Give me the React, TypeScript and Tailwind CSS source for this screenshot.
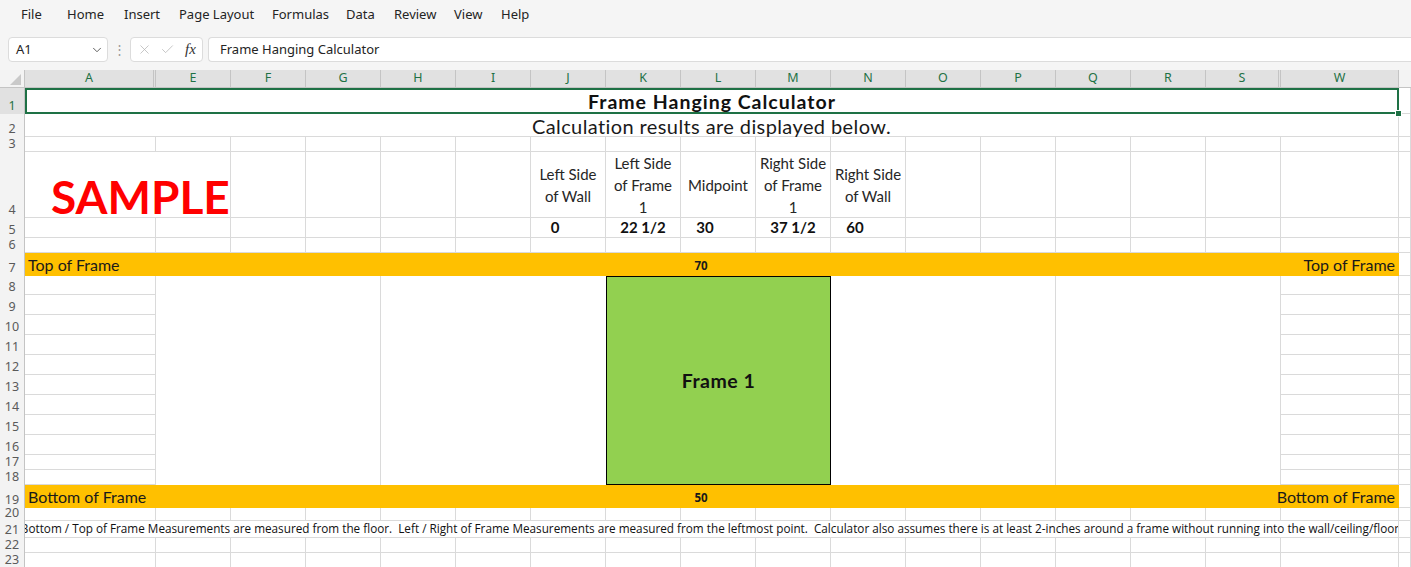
import { ChevronDown, X, Check } from "lucide-react";

const cell = "border-r border-b border-[#dadada]";

const colLetters = ["A", "E", "F", "G", "H", "I", "J", "K", "L", "M", "N", "O", "P", "Q", "R", "S", "W"];

const menu: [string, string][] = [
  ["File", "w-[46px]"],
  ["Home", "w-[57px]"],
  ["Insert", "w-[55px]"],
  ["Page Layout", "w-[93px]"],
  ["Formulas", "w-[74px]"],
  ["Data", "w-[48px]"],
  ["Review", "w-[60px]"],
  ["View", "w-[47px]"],
  ["Help", "w-[47px]"],
];

function RowHead({ n, sel }: { n: number; sel?: boolean }) {
  return (
    <div
      className={`flex items-end justify-center border-r border-[#c4c4c4] pb-[2px] font-['Noto_Sans'] text-[12.5px] leading-[12px] ${
        sel ? "bg-[#e1e1e1] text-[#1e7145]" : "bg-[#f3f3f3] text-[#5a5a5a]"
      }`}
    >
      {n}
    </div>
  );
}

function Blank({ n }: { n: number }) {
  return (
    <>
      {Array.from({ length: n }).map((_, i) => (
        <div key={i} className={cell} />
      ))}
    </>
  );
}

function Label({ lines }: { lines: string[] }) {
  return (
    <div className={`${cell} flex flex-col items-center justify-center whitespace-nowrap text-[15px] leading-[22px] text-[#262626]`}>
      {lines.map((l) => (
        <span key={l}>{l}</span>
      ))}
    </div>
  );
}

function Value({ v, whole }: { v: string; whole?: boolean }) {
  return (
    <div
      className={`${cell} flex items-center justify-center text-[15px] font-bold text-[#111] ${whole ? "pr-[26px]" : ""}`}
    >
      {v}
    </div>
  );
}

function Band({ label, value }: { label: string; value: string }) {
  return (
    <div className="col-span-17 grid grid-cols-[1fr_auto_1fr] items-center bg-[#ffc000] text-[16px] text-[#1a1a1a]">
      <span className="pl-[3px]">{label}</span>
      <span className="mr-[22px] pt-[2px] font-['Open_Sans'] text-[11.5px] font-bold">{value}</span>
      <span className="pr-[4px] text-right">{label}</span>
    </div>
  );
}

export default function App() {
  const midRows = [9, 10, 11, 12, 13, 14, 15, 16, 17, 18];

  return (
    <div className="h-[567px] w-[1411px] overflow-hidden bg-white">
      {/* ribbon tabs */}
      <div className="flex h-[29px] items-center bg-[#f5f5f5] pl-[21px] font-['Noto_Sans'] text-[13px] text-[#242424]">
        {menu.map(([m, w]) => (
          <span key={m} className={`${w} whitespace-nowrap`}>
            {m}
          </span>
        ))}
      </div>

      {/* formula bar */}
      <div className="flex h-[41px] items-start bg-[#f5f5f5] pt-[8px] font-['Noto_Sans'] text-[13px] text-[#242424]">
        <div className="ml-[8px] flex h-[25px] w-[100px] items-center justify-between rounded-[4px] border border-[#dcdcdc] bg-white pl-[7px] pr-[3px]">
          <span>A1</span>
          <ChevronDown size={14} strokeWidth={1.6} className="text-[#555]" />
        </div>
        <div className="flex h-[25px] w-[22px] items-center justify-center text-[#9a9a9a]">⋮</div>
        <div className="flex h-[25px] w-[73px] items-center rounded-[4px] border border-[#dcdcdc] bg-white pl-[6px]">
          <X size={15} strokeWidth={1.2} className="text-[#b4b4b4]" />
          <Check size={15} strokeWidth={1.2} className="ml-[8px] text-[#b4b4b4]" />
          <span className="ml-[10px] font-['Liberation_Serif'] text-[15px] italic text-[#333]">fx</span>
        </div>
        <div className="ml-[5px] flex h-[25px] flex-1 items-center rounded-l-[4px] border border-r-0 border-[#dcdcdc] bg-white pl-[11px] pt-[1px]">
          Frame Hanging Calculator
        </div>
      </div>

      {/* sheet */}
      <div className="grid grid-cols-[25px_131px_repeat(15,75px)_118px_1fr] grid-rows-[18px_26px_23px_15px_66px_20px_15px_23px_19px_repeat(8,20px)_15px_15px_23px_13px_17px_15px_15px] font-['Lato']">
        {/* header row */}
        <div className="relative border-r border-b border-[#c4c4c4] bg-[#f3f3f3]">
          <svg width="25" height="18" className="absolute inset-0">
            <polygon points="21,4 21,15 10,15" fill="#c9c9c9" />
          </svg>
        </div>
        {colLetters.map((c, i) => (
          <div
            key={c}
            className={`flex items-center justify-center border-b border-[#c4c4c4] bg-[#e1e1e1] font-['Noto_Sans'] text-[12.5px] text-[#1e7145] ${
              i === 0 || i === 15 ? "border-r-[3px] border-double" : "border-r"
            }`}
          >
            {c}
          </div>
        ))}
        <div className="border-b border-[#c4c4c4] bg-[#f3f3f3]" />

        {/* 1 */}
        <RowHead n={1} sel />
        <div className="relative col-span-17 flex items-center justify-center border-2 border-[#1e7145] pt-[2px] text-[19.5px] font-bold tracking-[1px] text-[#111]">
          Frame Hanging Calculator
          <div className="absolute -right-[5px] -bottom-[5px] h-[7px] w-[7px] border border-white bg-[#1e7145]" />
        </div>
        <div className={cell} />

        {/* 2 */}
        <RowHead n={2} />
        <div className={`${cell} col-span-17 flex items-end justify-center text-[20px] leading-[20px] tracking-[0.4px] text-[#1a1a1a]`}>
          Calculation results are displayed below.
        </div>
        <div className={cell} />

        {/* 3 */}
        <RowHead n={3} />
        <Blank n={18} />

        {/* 4 */}
        <RowHead n={4} />
        <div className={`${cell} col-span-2 flex items-end pl-[26px] text-[46px] font-bold leading-[40px] text-[#ff0000]`}>
          SAMPLE
        </div>
        <Blank n={4} />
        <Label lines={["Left Side", "of Wall"]} />
        <Label lines={["Left Side", "of Frame", "1"]} />
        <Label lines={["Midpoint"]} />
        <Label lines={["Right Side", "of Frame", "1"]} />
        <Label lines={["Right Side", "of Wall"]} />
        <Blank n={7} />

        {/* 5 */}
        <RowHead n={5} />
        <Blank n={6} />
        <Value v="0" whole />
        <Value v="22 1/2" />
        <Value v="30" whole />
        <Value v="37 1/2" />
        <Value v="60" whole />
        <Blank n={7} />

        {/* 6 */}
        <RowHead n={6} />
        <Blank n={18} />

        {/* 7 */}
        <RowHead n={7} />
        <Band label="Top of Frame" value="70" />
        <div className={cell} />

        {/* 8 - 18 */}
        <RowHead n={8} />
        <div className={cell} />
        <div className="col-span-3 row-span-11 border-r border-[#dadada]" />
        <div className="col-span-3 row-span-11" />
        <div className="col-span-3 row-span-11 flex items-center justify-center border border-black bg-[#92d050] text-[19.5px] font-bold tracking-[0.5px] text-[#111]">
          Frame 1
        </div>
        <div className="col-span-3 row-span-11 border-r border-[#dadada]" />
        <div className="col-span-3 row-span-11 border-r border-[#dadada]" />
        <div className={cell} />
        <div className={cell} />
        {midRows.map((r) => (
          <div key={r} className="contents">
            <RowHead n={r} />
            <div className={cell} />
            <div className={`${cell} col-start-18`} />
            <div className={cell} />
          </div>
        ))}

        {/* 19 */}
        <RowHead n={19} />
        <Band label="Bottom of Frame" value="50" />
        <div className={cell} />

        {/* 20 */}
        <RowHead n={20} />
        <Blank n={18} />

        {/* 21 */}
        <RowHead n={21} />
        <div className={`${cell} col-span-17 flex items-center justify-center overflow-hidden`}>
          <span className="whitespace-nowrap font-['Open_Sans'] text-[11.74px] text-[#111]">
            Bottom / Top of Frame Measurements are measured from the floor.&nbsp; Left / Right of Frame Measurements are
            measured from the leftmost point.&nbsp; Calculator also assumes there is at least 2-inches around a frame
            without running into the wall/ceiling/floor.
          </span>
        </div>
        <div className={cell} />

        {/* 22, 23 */}
        <RowHead n={22} />
        <Blank n={18} />
        <RowHead n={23} />
        <Blank n={18} />
      </div>
    </div>
  );
}
